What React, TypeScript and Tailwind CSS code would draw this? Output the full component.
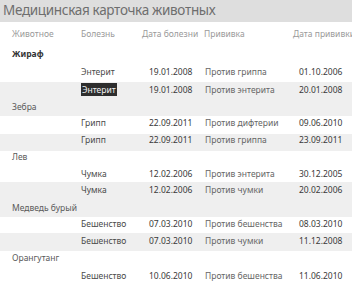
import React from "react";

type Row =
  | { kind: "group"; name: string; h: number; bg: string; bold?: boolean; pb?: number }
  | {
      kind: "item";
      disease: string;
      date: string;
      vac: string;
      vdate: string;
      h: number;
      bg: string;
      selected?: boolean;
      pb?: number;
    };

const W = "#ffffff";
const G = "#efefef";

const rows: Row[] = [
  { kind: "group", name: "Жираф", h: 19, bg: W, bold: true },
  { kind: "item", disease: "Энтерит", date: "19.01.2008", vac: "Против гриппа", vdate: "01.10.2006", h: 18, bg: W, pb: 2 },
  { kind: "item", disease: "Энтерит", date: "19.01.2008", vac: "Против энтерита", vdate: "20.01.2008", h: 17, bg: G, selected: true, pb: 1 },
  { kind: "group", name: "Зебра", h: 17, bg: G },
  { kind: "item", disease: "Грипп", date: "22.09.2011", vac: "Против дифтерии", vdate: "09.06.2010", h: 18, bg: W, pb: 4 },
  { kind: "item", disease: "Грипп", date: "22.09.2011", vac: "Против гриппа", vdate: "23.09.2011", h: 17, bg: G, pb: 4 },
  { kind: "group", name: "Лев", h: 16, bg: W, pb: 3 },
  { kind: "item", disease: "Чумка", date: "12.02.2006", vac: "Против энтерита", vdate: "30.12.2005", h: 15, bg: W },
  { kind: "item", disease: "Чумка", date: "12.02.2006", vac: "Против чумки", vdate: "20.02.2006", h: 17, bg: G },
  { kind: "group", name: "Медведь бурый", h: 18, bg: G },
  { kind: "item", disease: "Бешенство", date: "07.03.2010", vac: "Против бешенства", vdate: "08.03.2010", h: 16, bg: W, pb: 2 },
  { kind: "item", disease: "Бешенство", date: "07.03.2010", vac: "Против чумки", vdate: "11.12.2008", h: 18, bg: G, pb: 2 },
  { kind: "group", name: "Орангутанг", h: 17, bg: W, pb: 2 },
  { kind: "item", disease: "Бешенство", date: "10.06.2010", vac: "Против бешенства", vdate: "11.06.2010", h: 19, bg: W, pb: 2 },
];

export default function App() {
  return (
    <div
      className="w-[352px] h-[287px] overflow-hidden bg-white"
      style={{ fontFamily: '"Noto Sans", "Open Sans", sans-serif' }}
    >
      <div className="h-[22px] bg-[#dedede] pl-[3px] flex items-center">
        <span className="text-[13.5px] leading-none text-[#6e6e6e] tracking-[-0.32px]">
          Медицинская карточка животных
        </span>
      </div>
      <div className="mt-[4px] h-[17px] grid grid-cols-[81px_61px_62px_88px_1fr] items-center text-[8.5px] leading-none text-[#9a9a9a]">
        <div className="pl-[12px]">Животное</div>
        <div>Болезнь</div>
        <div>Дата болезни</div>
        <div>Прививка</div>
        <div className="pl-[1px] whitespace-nowrap overflow-hidden">Дата прививки</div>
      </div>
      <div className="mt-[2px]">
        {rows.map((r, i) =>
          r.kind === "group" ? (
            <div
              key={i}
              className="flex items-center pl-[12px] text-[8.5px] leading-none"
              style={{ height: r.h, background: r.bg, paddingBottom: r.pb ?? 0 }}
            >
              <span className={r.bold ? "font-bold text-[#333]" : "text-[#5a5a5a]"}>{r.name}</span>
            </div>
          ) : (
            <div
              key={i}
              className="grid grid-cols-[81px_61px_62px_88px_1fr] items-center text-[8.5px] leading-none"
              style={{ height: r.h, background: r.bg, paddingBottom: r.pb ?? 0 }}
            >
              <div />
              <div>
                {r.selected ? (
                  <span className="bg-[#2e2e2e] text-[#f4f4f4] px-[1px] py-[1px]">{r.disease}</span>
                ) : (
                  <span className="text-[#4a4a4a]">{r.disease}</span>
                )}
              </div>
              <div className="pl-[7px] text-[#3a3a3a]">{r.date}</div>
              <div className="pl-[1px] text-[#666]">{r.vac}</div>
              <div className="pl-[7px] text-[#3a3a3a]">{r.vdate}</div>
            </div>
          )
        )}
      </div>
    </div>
  );
}
